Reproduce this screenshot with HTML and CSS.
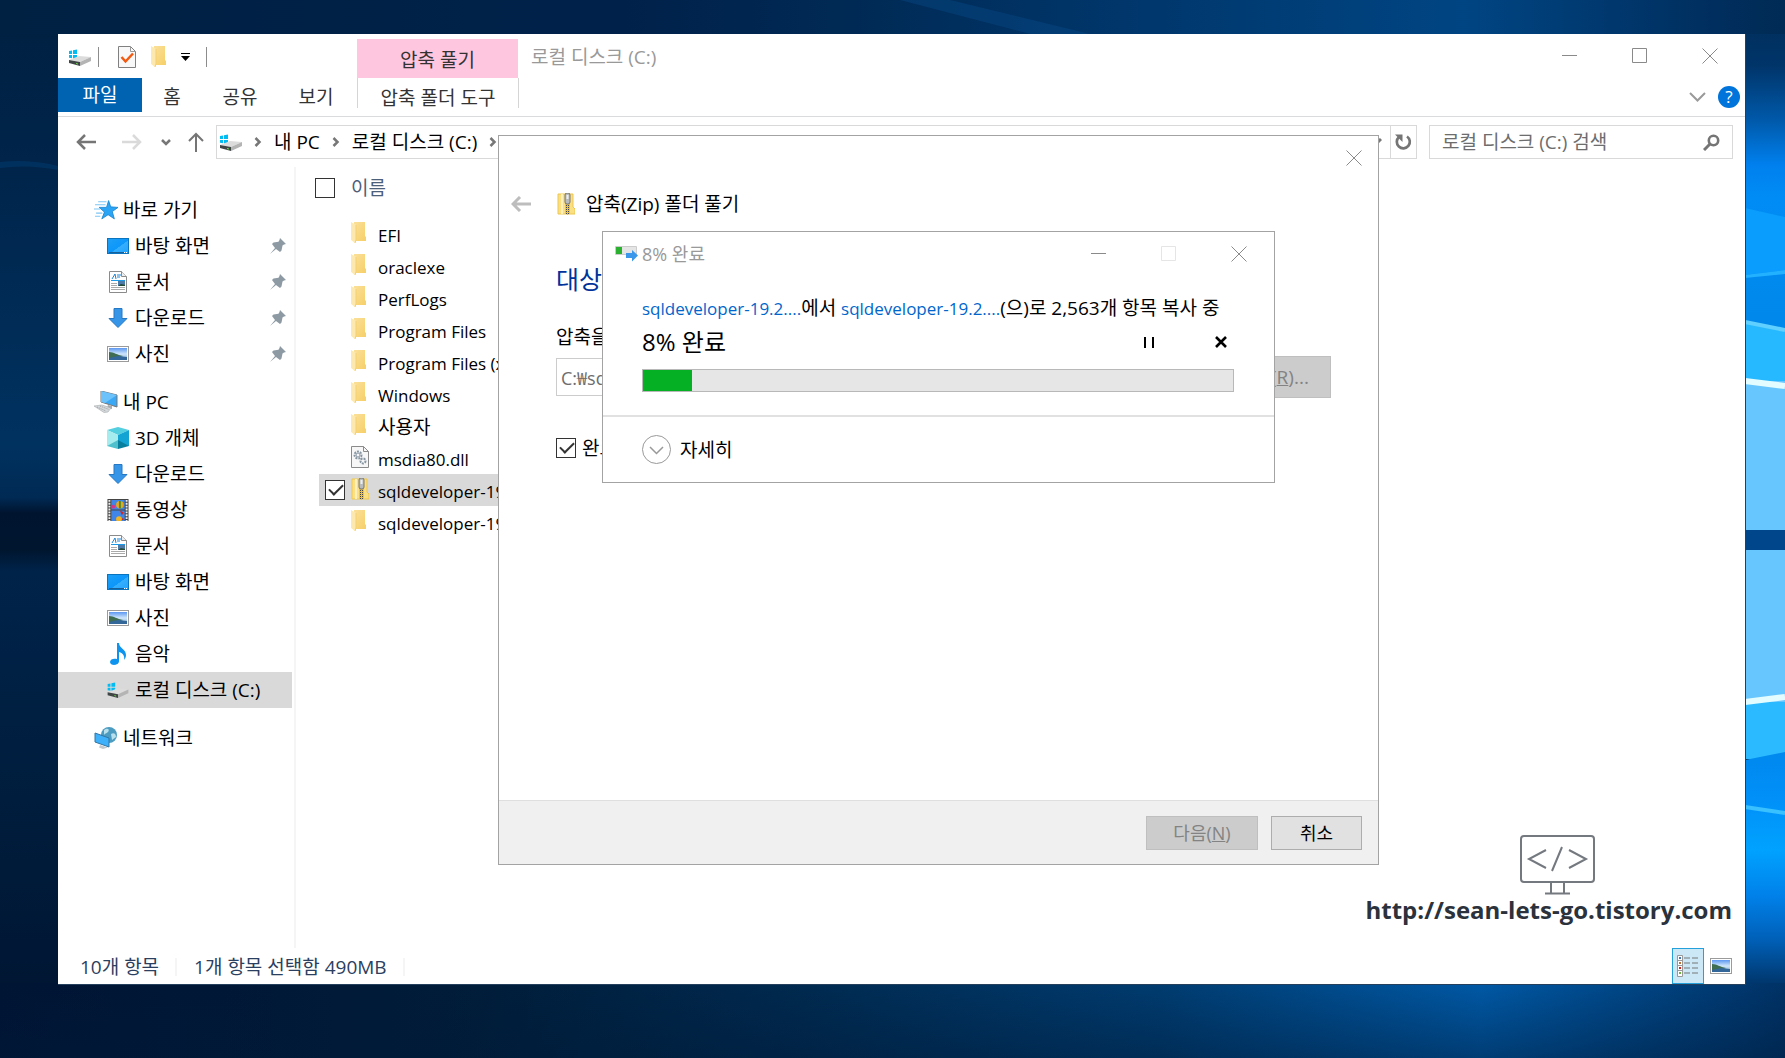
FILE: index.html
```html
<!DOCTYPE html>
<html lang="ko">
<head>
<meta charset="utf-8">
<title>로컬 디스크 (C:)</title>
<link rel="stylesheet" href="styles.css">
</head>
<body>
<svg class="defs" aria-hidden="true">
  <defs>
    <linearGradient id="gFold" x1="0" x2="1" y1="0" y2="1"><stop offset="0" stop-color="#fbe09a"/><stop offset="1" stop-color="#f6cf66"/></linearGradient>
    <linearGradient id="gBlue" x1="0" x2="1" y1="0" y2="1"><stop offset="0" stop-color="#1ea0f6"/><stop offset=".55" stop-color="#0c97fb"/><stop offset=".56" stop-color="#35aefe"/><stop offset="1" stop-color="#22a4fc"/></linearGradient>
    <linearGradient id="gSky" x1="0" x2="0" y1="0" y2="1"><stop offset="0" stop-color="#5c97f2"/><stop offset=".5" stop-color="#cfe6fb"/><stop offset="1" stop-color="#7fa9cf"/></linearGradient>
    <symbol id="drive" viewBox="0 0 22 17">
      <path d="M0 2l3-.5V5H0zM4 1.3L8 .6V5H4zM0 6h3v3.2L0 8.8zM4 6h4v4l-4-.6z" fill="#00bcf2"/>
      <path d="M0 11l10-4 12 1-11 5z" fill="#dcdcdc"/><path d="M11 13l11-5v4l-11 5z" fill="#b4b4b4"/><path d="M0 11l11 2v4L0 14z" fill="#3f4444"/><path d="M7 14l2 .4v1L7 15z" fill="#6ee04a"/>
    </symbol>
    <symbol id="folder" viewBox="0 0 15 22">
      <path d="M3 0h11v14l1 1v4H3z" fill="url(#gFold)"/><path d="M0 0l5 3v15l-1 3-4-3z" fill="#fde9b0"/><path d="M5 3v15l-1 3" fill="none" stroke="#f3d070"/>
    </symbol>
    <symbol id="zip" viewBox="0 0 18 22">
      <path d="M1 1h15v13l2 2v5H1z" fill="#fadf83" stroke="#eec750"/><path d="M5 1v20" stroke="#fdf0bd" stroke-width="2"/><path d="M8 1h5v20H8z" fill="#e9c257"/>
      <path d="M10.500 10v12" stroke="#444" stroke-width="3" stroke-dasharray="1 1"/><path d="M10.500 10v12" stroke="#bbb" stroke-width="1"/>
      <rect x="8" y="0" width="5" height="11" rx="2" fill="#b9bcbf" stroke="#777"/><rect x="9.500" y="2" width="2" height="4" fill="#eee"/>
    </symbol>
    <symbol id="desk" viewBox="0 0 22 16"><rect x=".5" y=".5" width="21" height="15" fill="url(#gBlue)" stroke="#0a74be"/><path d="M2 14.500h16M19 14.500h1" stroke="#fff"/><path d="M2 14.500h15" stroke="#17609a"/></symbol>
    <symbol id="doc" viewBox="0 0 18 22">
      <path d="M.5.5h12l5 5v16H.5z" fill="#fff" stroke="#8b8b8b"/><path d="M12.500.5v5h5" fill="#eee" stroke="#8b8b8b"/>
      <path d="M3 8l3-5 1 5M8 4h4M8 6h3" fill="none" stroke="#1b84d4"/><path d="M2 9.500h14" stroke="#1e9be8"/><path d="M2 12.500h6M2 14.500h6M2 16.500h14M2 18.500h14" stroke="#aaa"/><rect x="9" y="10" width="7" height="5" fill="#4d7aa8"/><path d="M9 15l3-2 4 1v1z" fill="#264c35"/>
    </symbol>
    <symbol id="down" viewBox="0 0 20 20"><path d="M6 .5h8v10h5L10 19.500 1 10.500h5z" fill="#3795e8" stroke="#2578c4"/></symbol>
    <symbol id="photo" viewBox="0 0 22 16"><rect x=".5" y=".5" width="21" height="15" fill="#fff" stroke="#9b9b9b"/><rect x="2" y="2" width="18" height="12" fill="url(#gSky)"/><path d="M2 6c5 0 8 3 14 4l-5 2H2z" fill="#3f6d52"/><path d="M2 12l9-2 9 1v3H2z" fill="#33679a"/></symbol>
    <symbol id="star" viewBox="0 0 23 18"><path d="M14 0l2 6 7 .5-5.500 4 2 7-6-4-6 4L10 11 5 6.500h7z" fill="#2aa5f5" stroke="#1683cf" stroke-width=".8"/><path d="M4 1h8M1 4h10M0 8h6M2 12h6M1 15h5" stroke="#7cc6f5"/></symbol>
    <symbol id="pc" viewBox="0 0 24 22"><path d="M7 0l16 4v12L7 11z" fill="#3ba8f5" stroke="#777"/><path d="M7 0l16 4-12 8-4-1z" fill="#6cc2fb"/><path d="M14 14l4 1v3l-5-1z" fill="#aaa"/><path d="M0 15l8-1 9 3-3 4-4 .5z" fill="#d6d9dc" stroke="#a5a9ad" stroke-width=".6"/><path d="M3 16l9 4M6 15l9 3.500" stroke="#999" stroke-dasharray="1 1"/></symbol>
    <symbol id="cube" viewBox="0 0 22 22"><path d="M0 3l11-3 11 3-11 5z" fill="#54cfe0"/><path d="M0 3l11 5v10L0 19z" fill="#a5ecee"/><path d="M22 3L11 8v10l11 1z" fill="#13a4d4"/><path d="M0 19l11-6v9z" fill="#4fc0cc"/><path d="M22 19l-11-6v9z" fill="#087f9c"/></symbol>
    <symbol id="film" viewBox="0 0 22 23"><path d="M0 0h22v23H0z" fill="#444"/><path d="M2 1v22M20 1v22" stroke="#eee" stroke-width="2" stroke-dasharray="2 1"/><path d="M4 1h14v10H4zM4 12h14v11H4z" fill="#3f86e8"/><circle cx="13" cy="6" r="4" fill="#e8a71d"/><path d="M12 2h2v8h-2z" fill="#4c8d2e"/><circle cx="6" cy="8" r="2" fill="#d9338b"/><path d="M13 12l4 2-2 3z" fill="#d6231c"/><circle cx="12" cy="21" r="3" fill="#f2b420"/><circle cx="16" cy="21" r="1" fill="#d6231c"/></symbol>
    <symbol id="note" viewBox="0 0 16 22"><path d="M7 0h2c0 5 7 6 7 12 0 2-1 4-2 5 1-5-2-7-5-8v9c0 5-9 5-9 1 0-3 4-4 7-3z" fill="#0e94ee"/></symbol>
    <symbol id="net" viewBox="0 0 22 22"><circle cx="14" cy="8" r="8" fill="#4c9bc0"/><path d="M9 3c4-3 6 0 4 2s-3 1-4 3zM16 7c3-2 5 0 5 3l-4 3z" fill="#b8e0ec"/><path d="M0 6l14 5v9L0 15z" fill="#3fb0fa" stroke="#3176a5"/><path d="M5 18l6 2 2 .5-5 1.500-4-1.500z" fill="#c5c9cc"/></symbol>
    <symbol id="pin" viewBox="0 0 16 16"><path d="M10 0l6 6-2 .6-1.500 1-1 5L10 14l-4-3-6 5 5-6-3-4 1.500-1.500 5-.8L9.500 2z" fill="#8d9aa3"/></symbol>
    <symbol id="chev" viewBox="0 0 8 10"><path d="M1.500 1l4 4-4 4" fill="none" stroke="#777" stroke-width="2.500"/></symbol>
    <symbol id="cross" viewBox="0 0 16 16"><path d="M.5.5l15 15M15.500.5l-15 15" fill="none" stroke="currentColor"/></symbol>
    <symbol id="dash" viewBox="0 0 16 16"><path d="M0 7.500h15" stroke="currentColor"/></symbol>
    <symbol id="box" viewBox="0 0 16 16"><path d="M.5.5h14v14H.5z" fill="none" stroke="currentColor"/></symbol>
  </defs>
</svg>

<svg class="wallpaper" viewBox="0 0 1785 1058" preserveAspectRatio="none" aria-hidden="true">
  <defs>
    <linearGradient id="wTop" x1="0" x2="1" y1="0" y2="0"><stop offset="0" stop-color="#002142"/><stop offset=".35" stop-color="#00214a"/><stop offset=".48" stop-color="#002a55"/><stop offset=".6" stop-color="#003467"/><stop offset=".82" stop-color="#004583"/><stop offset=".97" stop-color="#002d5c"/><stop offset="1" stop-color="#002b55"/></linearGradient>
    <linearGradient id="wLeft" x1="0" x2="0" y1="0" y2="1"><stop offset="0" stop-color="#002040"/><stop offset=".15" stop-color="#00244a"/><stop offset=".42" stop-color="#003260"/><stop offset=".47" stop-color="#002a54"/><stop offset=".485" stop-color="#00142f"/><stop offset=".52" stop-color="#00162f"/><stop offset=".54" stop-color="#00234a"/><stop offset=".7" stop-color="#001f40"/><stop offset="1" stop-color="#001430"/></linearGradient>
    <linearGradient id="wBot" x1="0" x2="1" y1="0" y2="0"><stop offset="0" stop-color="#001434"/><stop offset=".25" stop-color="#001c38"/><stop offset=".45" stop-color="#002a50"/><stop offset=".65" stop-color="#003c70"/><stop offset=".83" stop-color="#0059a6"/><stop offset=".93" stop-color="#00427f"/><stop offset="1" stop-color="#003266"/></linearGradient>
    <linearGradient id="wShade" x1="0" x2="0" y1="0" y2="1"><stop offset="0" stop-color="#001a38" stop-opacity="0"/><stop offset="1" stop-color="#001a38" stop-opacity=".45"/></linearGradient>
    <linearGradient id="wRight" x1="0" x2="0" y1="0" y2="1"><stop offset="0" stop-color="#002b55"/><stop offset=".2" stop-color="#00356a"/><stop offset=".36" stop-color="#0058a8"/><stop offset=".5" stop-color="#0080ee"/><stop offset=".6" stop-color="#008cf5"/><stop offset="1" stop-color="#0088ea"/></linearGradient>
    <linearGradient id="wRight2" x1="0" x2="0" y1="0" y2="1"><stop offset="0" stop-color="#0088ee"/><stop offset=".2" stop-color="#0090f8"/><stop offset=".42" stop-color="#00a2ff"/><stop offset=".62" stop-color="#0080e8"/><stop offset=".8" stop-color="#0060b8"/><stop offset="1" stop-color="#003468"/></linearGradient>
  </defs>
  <rect width="1785" height="1058" fill="url(#wLeft)"/>
  <path d="M0 162q30-3 58 4v4q-30-6-58-2z" fill="#004880" opacity=".35"/>
  <rect x="1745" width="40" height="330" fill="url(#wRight)"/>
  <path d="M1745 208l40 9v53l-40 5z" fill="#0a9dfd"/>
  <path d="M1745 275l40-5v4l-40 4z" fill="#22b1ff"/>
  <path d="M1745 322l40 8v57l-40-6z" fill="#26b9ff"/>
  <path d="M1745 322l40 8" stroke="#5fd0ff" stroke-width="4"/>
  <rect x="1745" y="381" width="40" height="321" fill="#68c6ff"/>
  <path d="M1745 381l40 5" stroke="#e3fcff" stroke-width="6"/>
  <rect x="1745" y="530" width="40" height="20" fill="#00468a"/>
  <rect x="1745" y="702" width="40" height="57" fill="#2bbaff"/>
  <path d="M1745 702l40-5" stroke="#e3fcff" stroke-width="6"/>
  <path d="M1745 760l40-8v234h-40z" fill="url(#wRight2)"/>
  <path d="M1745 807l40 6" stroke="#38c0ff" stroke-width="4"/>
  <rect width="1785" height="34" fill="url(#wTop)"/>
  <path d="M900 0h50l140 34h-60z" fill="#0a4f90" opacity=".35"/>
  <rect y="983" width="1785" height="75" fill="url(#wBot)"/>
  <rect y="983" width="1785" height="75" fill="url(#wShade)"/>
</svg>

<div class="desktop">
<main class="window">
  <header class="titlebar">
    <div class="quick">
      <svg class="i-drive"><use href="#drive"/></svg><span class="bar"></span>
      <button class="plain" aria-label="속성"><svg width="18" height="22" viewBox="0 0 18 22"><path d="M.5.5h12l5 5v16H.5z" fill="#f8f8f8" stroke="#808080"/><path d="M12.500.5v5h5" fill="none" stroke="#999"/><path d="M3.500 11l4 4.500L15 7.500" fill="none" stroke="#f25a12" stroke-width="2.500"/></svg></button>
      <button class="plain" aria-label="새 폴더"><svg class="i-folder"><use href="#folder"/></svg></button>
      <button class="plain" aria-label="사용자 지정"><svg width="9" height="8" viewBox="0 0 9 8"><path d="M0 .5h9" stroke="#000"/><path d="M0 3h9L4.500 8z"/></svg></button><span class="bar"></span>
    </div>
    <div class="ctx">압축 풀기</div>
    <h1 class="wtitle">로컬 디스크 (C:)</h1>
    <div class="winbtns">
      <button class="plain" aria-label="최소화"><svg class="i16"><use href="#dash"/></svg></button>
      <button class="plain" aria-label="최대화"><svg class="i16"><use href="#box"/></svg></button>
      <button class="plain" aria-label="닫기"><svg class="i16"><use href="#cross"/></svg></button>
    </div>
  </header>
  <nav class="tabs">
    <button class="tab file">파일</button><button class="tab home">홈</button><button class="tab">공유</button><button class="tab">보기</button><button class="tab tools">압축 폴더 도구</button>
    <div class="help"><button class="plain" aria-label="리본 확장"><svg width="17" height="10" viewBox="0 0 17 10"><path d="M1 1l7.500 7.500L16 1" fill="none" stroke="#9a9a9a" stroke-width="2"/></svg></button><button class="plain qm" aria-label="도움말">?</button></div>
  </nav>
  <div class="address">
    <div class="arrows">
      <button class="plain" aria-label="뒤로"><svg width="20" height="16" viewBox="0 0 20 16"><path d="M20 8H2M9 1L2 8l7 7" fill="none" stroke="#757575" stroke-width="2.500"/></svg></button>
      <button class="plain" aria-label="앞으로"><svg width="20" height="16" viewBox="0 0 20 16"><path d="M0 8h18M11 1l7 7-7 7" fill="none" stroke="#dadada" stroke-width="2.500"/></svg></button>
      <button class="plain" aria-label="최근 위치"><svg width="10" height="7" viewBox="0 0 10 7"><path d="M1 1l4 4 4-4" fill="none" stroke="#777" stroke-width="2.500"/></svg></button>
      <button class="plain" aria-label="위로"><svg width="16" height="20" viewBox="0 0 16 20"><path d="M8 20V2M1 9l7-7 7 7" fill="none" stroke="#757575" stroke-width="2"/></svg></button>
    </div>
    <div class="path">
      <svg class="i-drive"><use href="#drive"/></svg><svg class="i-chev"><use href="#chev"/></svg><a href="#pc">내 PC</a><svg class="i-chev"><use href="#chev"/></svg><a href="#c">로컬 디스크 (C:)</a><svg class="i-chev"><use href="#chev"/></svg>
      <button class="plain hist" aria-label="이전 위치"><svg width="12" height="9" viewBox="0 0 12 9"><path d="M1 1l5 5 5-5" fill="none" stroke="#777" stroke-width="3"/></svg></button>
      <button class="plain refresh" aria-label="새로 고침"><svg width="17" height="17" viewBox="0 0 17 17"><path d="M12 2.500A6.500 6.500 0 1 1 4 3" fill="none" stroke="#757575" stroke-width="2.700"/><path d="M0 .5h7.500V8z" fill="#757575"/></svg></button>
    </div>
    <label class="search"><input type="search" aria-label="검색" placeholder="로컬 디스크 (C:) 검색"><svg width="17" height="17" viewBox="0 0 17 17"><circle cx="10.500" cy="6.500" r="4.700" fill="none" stroke="#757575" stroke-width="2.600"/><path d="M7 10l-6 6" stroke="#757575" stroke-width="3"/></svg></label>
  </div>
  <div class="content">
    <aside class="nav">
      <ul>
        <li class="root"><svg class="ic w20"><use href="#star"/></svg>바로 가기</li>
        <li><svg class="ic w16"><use href="#desk"/></svg>바탕 화면<svg class="pin"><use href="#pin"/></svg></li>
        <li><svg class="ic"><use href="#doc"/></svg>문서<svg class="pin"><use href="#pin"/></svg></li>
        <li><svg class="ic w20"><use href="#down"/></svg>다운로드<svg class="pin"><use href="#pin"/></svg></li>
        <li><svg class="ic w16"><use href="#photo"/></svg>사진<svg class="pin"><use href="#pin"/></svg></li>
      </ul>
      <ul>
        <li class="root"><svg class="ic"><use href="#pc"/></svg>내 PC</li>
        <li><svg class="ic"><use href="#cube"/></svg>3D 개체</li>
        <li><svg class="ic w20"><use href="#down"/></svg>다운로드</li>
        <li><svg class="ic"><use href="#film"/></svg>동영상</li>
        <li><svg class="ic"><use href="#doc"/></svg>문서</li>
        <li><svg class="ic w16"><use href="#desk"/></svg>바탕 화면</li>
        <li><svg class="ic w16"><use href="#photo"/></svg>사진</li>
        <li><svg class="ic"><use href="#note"/></svg>음악</li>
        <li class="sel"><svg class="ic w16"><use href="#drive"/></svg>로컬 디스크 (C:)</li>
      </ul>
      <ul>
        <li class="root"><svg class="ic"><use href="#net"/></svg>네트워크</li>
      </ul>
    </aside>
    <table class="files">
      <thead><tr><th class="c"><input type="checkbox" class="chk" aria-label="모두 선택"></th><th colspan="2" class="hname">이름</th></tr></thead>
      <tbody>
        <tr><td></td><td class="fi"><svg class="i-folder"><use href="#folder"/></svg></td><td class="n">EFI</td></tr>
        <tr><td></td><td class="fi"><svg class="i-folder"><use href="#folder"/></svg></td><td class="n">oraclexe</td></tr>
        <tr><td></td><td class="fi"><svg class="i-folder"><use href="#folder"/></svg></td><td class="n">PerfLogs</td></tr>
        <tr><td></td><td class="fi"><svg class="i-folder"><use href="#folder"/></svg></td><td class="n">Program Files</td></tr>
        <tr><td></td><td class="fi"><svg class="i-folder"><use href="#folder"/></svg></td><td class="n">Program Files (x86)</td></tr>
        <tr><td></td><td class="fi"><svg class="i-folder"><use href="#folder"/></svg></td><td class="n">Windows</td></tr>
        <tr><td></td><td class="fi"><svg class="i-folder"><use href="#folder"/></svg></td><td class="n ko">사용자</td></tr>
        <tr><td></td><td class="fi"><svg width="18" height="22" viewBox="0 0 18 22"><path d="M.5.5h12l5 5v16H.5z" fill="#f7f7f7" stroke="#8b8b8b"/><path d="M12.500.5v5h5" fill="none" stroke="#8b8b8b"/><circle cx="7" cy="9" r="3.500" fill="none" stroke="#8795a1" stroke-width="2" stroke-dasharray="2 1"/><circle cx="7" cy="9" r="2" fill="none" stroke="#8795a1"/><circle cx="12" cy="15" r="2.500" fill="none" stroke="#8795a1" stroke-width="2" stroke-dasharray="2 1"/></svg></td><td class="n">msdia80.dll</td></tr>
        <tr class="sel"><td class="c"><input type="checkbox" class="chk" checked aria-label="sqldeveloper 선택"></td><td class="fi"><svg class="i-zip"><use href="#zip"/></svg></td><td class="n">sqldeveloper-19.2</td></tr>
        <tr><td></td><td class="fi"><svg class="i-folder"><use href="#folder"/></svg></td><td class="n">sqldeveloper-19.2</td></tr>
      </tbody>
    </table>
    <div class="mark">
      <svg width="76" height="60" viewBox="0 0 76 60"><g fill="none" stroke="#747980" stroke-width="2"><rect x="1" y="1" width="73" height="46" rx="3"/><path d="M31 48v10M44 48v10M25 58.500h25M26 15L9 24l17 9M49 15l17 9-17 9M42 12l-10 24"/></g></svg>
      <a href="http://sean-lets-go.tistory.com">http://sean-lets-go.tistory.com</a>
    </div>
  </div>
  <footer class="status">
    <span>10개 항목</span><span>1개 항목 선택함 490MB</span>
    <div class="views">
      <button class="plain on" aria-label="자세히 보기"><svg width="22" height="22" viewBox="0 0 22 22"><path d="M.5.500h5v21h-5zM.5 5.500h5M.5 10.500h5M.5 15.500h5" fill="#fff" stroke="#999"/><path d="M7 3h6M15 3h6M7 8h6M15 8h6M7 13h6M15 13h6M7 18h6M15 18h6" stroke="#777"/><path d="M2 2h2v2H2z" fill="#4677b0"/><path d="M2 7h2v2H2z" fill="#c07030"/><path d="M2 12h2v2H2z" fill="#d0231c"/><path d="M2 17h2v2H2z" fill="#6db33f"/></svg></button>
      <button class="plain" aria-label="큰 아이콘"><svg width="22" height="16"><use href="#photo"/></svg></button>
    </div>
  </footer>
</main>

<section class="wizard" role="dialog" aria-label="압축 풀기">
  <div class="wclose"><button class="plain" aria-label="닫기"><svg class="i16"><use href="#cross"/></svg></button></div>
  <div class="whead"><button class="plain" aria-label="뒤로"><svg width="20" height="16" viewBox="0 0 20 16"><path d="M20 8H2M9 1L2 8l7 7" fill="none" stroke="#bdbdbd" stroke-width="3"/></svg></button><svg class="i-zip"><use href="#zip"/></svg><span>압축(Zip) 폴더 풀기</span></div>
  <div class="wbody">
    <h2>대상</h2>
    <label for="dest">압축을</label>
    <div class="dest"><input id="dest" type="text" value="C:₩sqldeveloper" disabled><button class="btn browse" disabled>찾아보기(<u>R</u>)...</button></div>
    <label class="done"><input type="checkbox" class="chk" checked>완료</label>
  </div>
  <div class="wfoot"><button class="btn next" disabled>다음(<u>N</u>)</button><button class="btn cancel">취소</button></div>
</section>

<section class="progress" role="dialog" aria-label="8% 완료">
  <div class="phead">
    <svg width="23" height="16" viewBox="0 0 23 16"><path d="M.5.500h21v8H.5z" fill="#e5e5e5" stroke="#ccc"/><path d="M1 1h6v7H1z" fill="#2bb02f"/><path d="M11 7h6V4l6 5.500-6 6V12h-6z" fill="#3b97ea"/></svg>
    <span>8% 완료</span>
    <div class="winbtns">
      <button class="plain" aria-label="최소화"><svg class="i16"><use href="#dash"/></svg></button>
      <button class="plain off" aria-label="최대화" disabled><svg class="i16"><use href="#box"/></svg></button>
      <button class="plain" aria-label="닫기"><svg class="i16"><use href="#cross"/></svg></button>
    </div>
  </div>
  <div class="pbody">
    <p class="from"><a href="#src">sqldeveloper-19.2....</a>에서 <a href="#dst">sqldeveloper-19.2....</a>(으)로 2,563개 항목 복사 중</p>
    <div class="pct"><strong>8% 완료</strong><button class="plain" aria-label="일시 중지"><svg width="10" height="11" viewBox="0 0 10 11"><path d="M1 0v11M9 0v11" stroke="#000" stroke-width="2"/></svg></button><button class="plain" aria-label="취소"><svg width="12" height="12" viewBox="0 0 12 12"><path d="M1 1l10 10M11 1L1 11" stroke="#000" stroke-width="2.600"/></svg></button></div>
    <div class="meter" role="progressbar" aria-valuenow="8"><div class="fill" style="width:8.300%"></div></div>
  </div>
  <button class="plain more"><svg width="29" height="29" viewBox="0 0 29 29"><circle cx="14.500" cy="14.500" r="14" fill="none" stroke="#999"/><path d="M8 12l6.500 6.500L21 12" fill="none" stroke="#999" stroke-width="1.500"/></svg>자세히</button>
</section>
</div>
</body>
</html>
```
FILE: styles.css
```css
* { box-sizing: border-box; }
body { margin: 0; background: #00214a; color: #000; font: 19px/24px "Open Sans", "Noto Sans CJK KR", sans-serif; overflow: hidden; }
.defs { position: absolute; width: 0; height: 0; }
.wallpaper { position: fixed; inset: 0; width: 100%; height: 100%; }
.desktop { position: relative; min-height: 100vh; padding: 34px 39px 73px 58px; display: flex; }
svg { flex: none; display: block; }
button, input { font: inherit; }
a { color: inherit; text-decoration: none; }
.plain { border: 0; padding: 0; background: none; color: inherit; display: flex; align-items: center; justify-content: center; }
.i16 { width: 16px; height: 16px; }
.i-drive { width: 22px; height: 17px; }
.i-folder { width: 15px; height: 22px; }
.i-zip { width: 18px; height: 22px; }
.i-chev { width: 8px; height: 10px; }

.window { flex: 1; display: flex; flex-direction: column; background: #fff; border: 1px solid #24405c; border-width: 0 1px 1px 0; min-width: 0; }

.titlebar { display: flex; height: 44px; align-items: stretch; }
.quick { width: 299px; display: flex; align-items: center; padding: 2px 0 0 11px; }
.quick .bar { width: 1px; height: 20px; background: #8c8c8c; margin-left: 7px; }
.quick button { margin-left: 15px; }
.quick button:first-of-type { margin-left: 19px; }
.quick .bar:last-child { margin-left: 16px; }
.ctx { width: 161px; margin-top: 5px; padding-top: 2px; background: #ffc6df; color: #333; display: flex; align-items: center; justify-content: center; }
.wtitle { margin: 0; padding-left: 13px; font-size: 19px; font-weight: 400; line-height: 46px; color: #999; flex: 1; }
.winbtns { display: flex; align-items: center; color: #8a8a8a; }
.winbtns button { width: 70px; height: 44px; }

.tabs { display: flex; height: 39px; border-bottom: 1px solid #dadbdc; color: #333; }
.tab { border: 0; background: none; color: inherit; width: 76px; padding: 0; height: 38px; }
.tab.file { width: 84px; height: 34px; background: #0063b1; color: #fff; }
.tab.home { width: 60px; }
.tab.tools { width: 162px; margin-left: 3px; height: 30px; padding-top: 8px; border: 1px solid #d5d5d5; border-width: 0 1px; }
.help { margin-left: auto; display: flex; align-items: center; gap: 12px; padding-right: 5px; }
.qm { width: 22px; height: 22px; border-radius: 50%; background: #0074da; color: #fff; font-size: 17px; }

.address { display: flex; height: 50px; align-items: center; }
.arrows { width: 158px; padding-left: 18px; display: flex; align-items: center; }
.arrows button { margin-right: 23px; }
.arrows button:nth-child(2) { margin-right: 22px; margin-left: 3px; }
.arrows button:nth-child(3) { margin: 0 17px 0 -3px; }
.arrows button:last-child { margin: 0; }
.path { flex: 1; height: 34px; border: 1px solid #d9d9d9; display: flex; align-items: center; padding-left: 3px; }
.path a { margin: 0 12px; }
.path .i-drive { margin-right: 12px; }
.hist { margin-left: auto; width: 28px; height: 32px; }
.refresh { width: 26px; height: 32px; border-left: 1px solid #d9d9d9; }
.search { width: 304px; height: 34px; margin: 0 12px; border: 1px solid #d9d9d9; display: flex; align-items: center; padding: 0 12px; }
.search input { flex: 1; min-width: 0; border: 0; padding: 0; outline: 0; background: none; }
.search input::placeholder { color: #6d6d6d; opacity: 1; }

.content { flex: 1; display: flex; position: relative; min-height: 0; }
.nav { width: 238px; border-right: 2px solid #f5f5f5; padding-top: 25px; }
.nav ul { list-style: none; margin: 0 0 12px; padding: 0; }
.nav li { display: flex; align-items: center; height: 36px; padding: 0 6px 0 48px; margin-right: 2px; white-space: nowrap; }
.nav li.root { padding-left: 36px; }
.nav .sel, .files .sel { background: #d9d9d9; }
.ic { width: 24px; height: 22px; margin-right: 5px; }
.ic.w16 { height: 16px; }
.ic.w20 { height: 20px; }
.pin { width: 16px; height: 16px; margin-left: auto; }

.files { border-collapse: collapse; margin: 0 0 auto 23px; }
.files th { font-weight: 400; text-align: left; height: 51px; padding: 0 0 10px; color: #4c607a; }
.files th.c { width: 32px; }
.files th .chk { margin-left: -4px; }
.files td { height: 32px; padding: 0; white-space: nowrap; }
.files td.c { padding-left: 6px; }
.files td.n { font-size: 17px; padding-top: 4px; }
.files td.ko { font-size: 19px; padding-top: 2px; }
.files .fi { width: 27px; }
.files .fi svg { margin-bottom: 2px; }
.chk { appearance: none; display: block; position: relative; width: 20px; height: 20px; margin: 0; border: 1px solid #333; background: #fff; }
.chk:checked::after { content: ""; position: absolute; left: 3px; top: 3px; width: 12px; height: 6px; border: solid #333; border-width: 0 0 2px 2px; transform: rotate(-45deg); }

.mark { position: absolute; right: 13px; bottom: 24px; display: flex; flex-direction: column; align-items: center; gap: 1px; color: #2b323c; font: 700 24px/28px "Open Sans", sans-serif; }
.mark svg { margin-left: 18px; }

.status { display: flex; height: 36px; align-items: center; color: #2b4060; padding-left: 22px; }
.status span { padding-right: 16px; margin: 2px 17px 0 0; border-right: 2px solid #f5f5f5; line-height: 18px; }
.views { margin-left: auto; display: flex; align-self: stretch; }
.views button { width: 32px; }
.views .on { background: #cce8f7; border: 1px solid #26a0da; }
.views button:last-child { width: 41px; padding-right: 7px; }

.wizard { position: absolute; left: 498px; top: 135px; width: 881px; height: 730px; background: #fff; border: 1px solid #a3a3a3; display: flex; flex-direction: column; }
.wclose { display: flex; justify-content: flex-end; padding: 14px 16px 0 0; color: #8a8a8a; height: 45px; align-items: flex-start; }
.whead { display: flex; align-items: center; padding-left: 12px; height: 46px; }
.whead .i-zip { margin: 0 11px 0 26px; }
.wbody { padding: 34px 47px 0 57px; flex: 1; }
.wbody h2 { margin: 0; font-size: 25px; line-height: 36px; font-weight: 400; color: #003399; }
.wbody > label { display: block; margin-top: 28px; line-height: 24px; }
.dest { display: flex; gap: 14px; margin-top: 9px; }
.dest input { flex: 1; height: 38px; border: 1px solid #ccc; background: #fff; color: #6d6d6d; padding: 0 4px; font-size: 18px; }
.btn { border: 1px solid #adadad; background: #e1e1e1; color: #000; padding: 0; height: 34px; font-size: 18px; }
.btn:disabled { background: #ccc; border-color: #bfbfbf; color: #838383; }
.btn.browse { width: 152px; height: 42px; margin-top: -2px; font-size: 19px; }
.wbody .done { display: flex; align-items: center; gap: 6px; margin-top: 38px; }
.wfoot { height: 64px; background: #f0f0f0; border-top: 1px solid #dfdfdf; display: flex; justify-content: flex-end; gap: 13px; padding: 15px 16px 0 0; }
.next { width: 112px; }
.cancel { width: 91px; }

.progress { position: absolute; left: 602px; top: 231px; width: 673px; height: 252px; background: #fff; border: 1px solid #a3a3a3; display: flex; flex-direction: column; }
.phead { display: flex; align-items: center; height: 44px; padding-left: 12px; gap: 4px; color: #999; font-size: 18px; }
.phead .winbtns { margin-left: auto; }
.off { color: #e5e5e5; }
.pbody { padding: 20px 40px 23px 39px; border-bottom: 2px solid #e1e1e1; }
.from { margin: 0; white-space: nowrap; }
.from a { color: #0066cc; font-size: 17px; }
.pct { display: flex; align-items: center; height: 42px; padding-right: 7px; }
.pct strong { font-size: 24px; font-weight: 400; margin-right: auto; }
.pct button:last-child { margin-left: 61px; }
.meter { height: 23px; border: 1px solid #b8b8b8; background: #e6e6e6; margin-top: 6px; }
.fill { height: 100%; background: #06b025; }
.more { flex: 1; gap: 9px; justify-content: flex-start; padding-left: 39px; }
```
